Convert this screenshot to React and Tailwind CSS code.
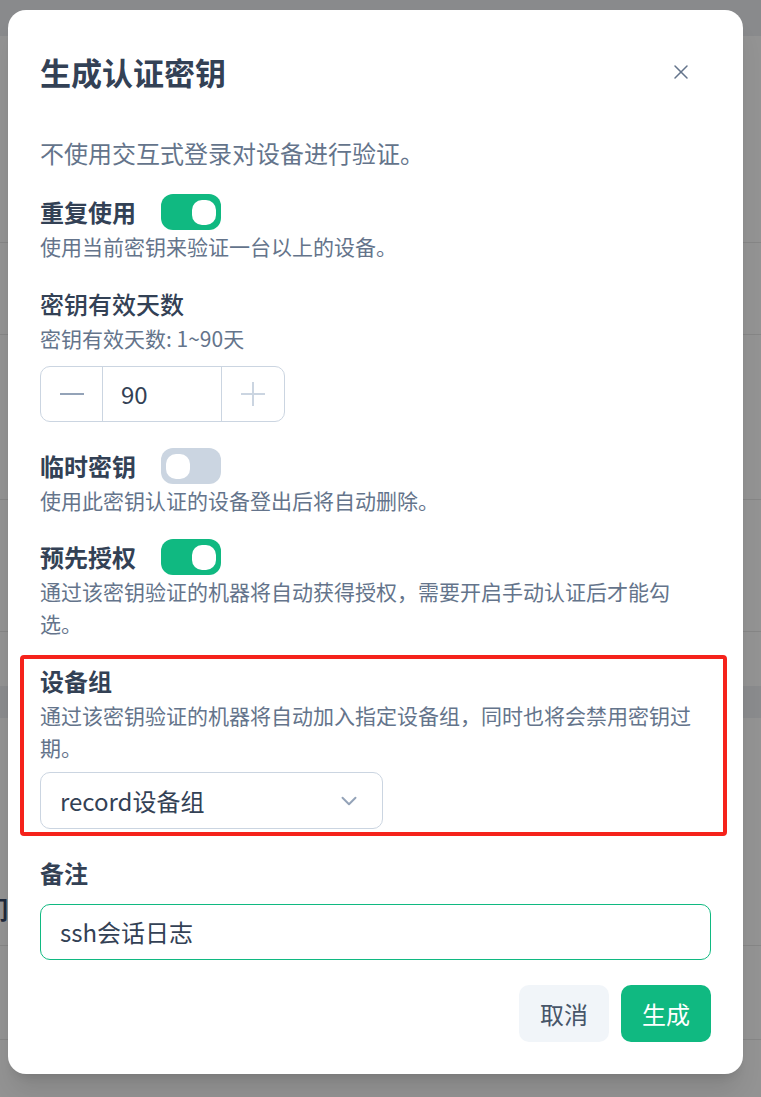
import { X, ChevronDown } from 'lucide-react';

const font = { fontFamily: '"Noto Sans CJK SC", "Noto Sans", sans-serif' };

function Toggle({ on }) {
  return (
    <span
      className={
        on
          ? 'ml-[25px] flex h-[36px] w-[60px] items-center justify-end rounded-[12px] bg-[#10b981] px-[5px]'
          : 'ml-[25px] flex h-[36px] w-[60px] items-center justify-start rounded-[12px] bg-[#cbd5e1] px-[5px]'
      }
    >
      <span className="h-[25px] w-[24px] rounded-[10px] bg-white" />
    </span>
  );
}

function Hint({ children, className = '' }) {
  return <p className={'pr-[10px] text-[21px] leading-[32px] text-[#64748b] ' + className}>{children}</p>;
}

// faint rows of the page behind the overlay
function Backdrop() {
  return (
    <div className="flex flex-col">
      <div className="h-[36px] bg-[#898a8c]" />
      <div className="h-[207px] border-b border-[#868686]" />
      <div className="h-[92px] border-b border-[#868686]" />
      <div className="h-[165px] border-b border-[#868686]" />
      <div className="h-[132px] border-b border-[#868686]" />
      <div className="h-[54px]" />
      <div className="h-[32px] bg-[#8a8b8d]" />
      <div className="flex h-[228px] items-end border-b border-[#868686]">
        <span className="-ml-[16px] mb-[18px] text-[24px] font-bold leading-[36px] text-[#1e293b]">们</span>
      </div>
      <div className="h-[94px] border-b border-[#868686]" />
    </div>
  );
}

export default function App() {
  return (
    <div className="relative h-[1097px] w-[761px] overflow-hidden bg-[#939393]" style={font}>
      <Backdrop />

      <div className="absolute left-[8px] top-[10px] flex w-[735px] flex-col rounded-[18px] bg-white px-8 pb-8 pt-[42px] shadow-xl">
        {/* header */}
        <div className="flex h-[40px] items-center justify-between">
          <h2 className="text-[31px] font-bold leading-[40px] text-[#334155]">生成认证密钥</h2>
          <button className="mr-[14px] flex h-8 w-8 items-center justify-center text-[#64748b]">
            <X size={24} strokeWidth={1.5} />
          </button>
        </div>

        <p className="mt-[43px] text-[24px] leading-[36px] text-[#64748b]">不使用交互式登录对设备进行验证。</p>

        {/* reuse */}
        <div className="mt-[23px] flex h-[36px] items-center">
          <span className="text-[24px] font-bold leading-[36px] text-[#334155]">重复使用</span>
          <Toggle on />
        </div>
        <Hint>使用当前密钥来验证一台以上的设备。</Hint>

        {/* expiry days */}
        <div className="mt-[24px] text-[24px] font-medium leading-[36px] text-[#334155]">密钥有效天数</div>
        <Hint>密钥有效天数: 1~90天</Hint>
        <div className="mt-[12px] flex h-[56px] w-[245px] overflow-hidden rounded-[10px] border border-[#cbd5e1]">
          <button className="flex w-[61px] items-center justify-center">
            <svg width="26" height="26" viewBox="0 0 26 26">
              <path d="M1 13h24" stroke="#94a3b8" strokeWidth="2.2" />
            </svg>
          </button>
          <div className="flex flex-1 items-center border-x border-[#cbd5e1] pl-[18px] text-[24px] text-[#334155]">90</div>
          <button className="flex w-[62px] items-center justify-center">
            <svg width="26" height="26" viewBox="0 0 26 26">
              <path d="M1 13h24M13 1v24" stroke="#cbd5e1" strokeWidth="2" />
            </svg>
          </button>
        </div>

        {/* ephemeral */}
        <div className="mt-[26px] flex h-[36px] items-center">
          <span className="text-[24px] font-bold leading-[36px] text-[#334155]">临时密钥</span>
          <Toggle on={false} />
        </div>
        <Hint>使用此密钥认证的设备登出后将自动删除。</Hint>

        {/* preauthorized */}
        <div className="mt-[23px] flex h-[36px] items-center">
          <span className="text-[24px] font-bold leading-[36px] text-[#334155]">预先授权</span>
          <Toggle on />
        </div>
        <Hint>通过该密钥验证的机器将自动获得授权，需要开启手动认证后才能勾选。</Hint>

        {/* device group, highlighted */}
        <div className="-ml-5 -mr-4 mt-[16px] rounded-[4px] border-4 border-[#f5221b] pb-[3px] pl-4 pr-3 pt-[4px]">
          <div className="text-[24px] font-bold leading-[36px] text-[#334155]">设备组</div>
          <Hint>通过该密钥验证的机器将自动加入指定设备组，同时也将会禁用密钥过期。</Hint>
          <div className="mt-[9px] flex h-[57px] w-[343px] items-center justify-between rounded-[10px] border border-[#cbd5e1] pl-[19px] pr-[20px]">
            <span className="text-[24px] text-[#334155]">record设备组</span>
            <ChevronDown size={26} strokeWidth={1.8} className="text-[#94a3b8]" />
          </div>
        </div>

        {/* note */}
        <div className="mt-[19px] text-[24px] font-bold leading-[36px] text-[#334155]">备注</div>
        <div className="mt-[13px] flex h-[56px] items-center rounded-[10px] border border-[#10b981] px-[19px] text-[24px] text-[#334155]">
          ssh会话日志
        </div>

        {/* actions */}
        <div className="mt-[25px] flex justify-end gap-3">
          <button className="h-[57px] w-[90px] rounded-[10px] bg-[#f1f5f9] text-[24px] text-[#475569]">取消</button>
          <button className="h-[57px] w-[90px] rounded-[10px] bg-[#10b981] text-[24px] text-white">生成</button>
        </div>
      </div>
    </div>
  );
}
